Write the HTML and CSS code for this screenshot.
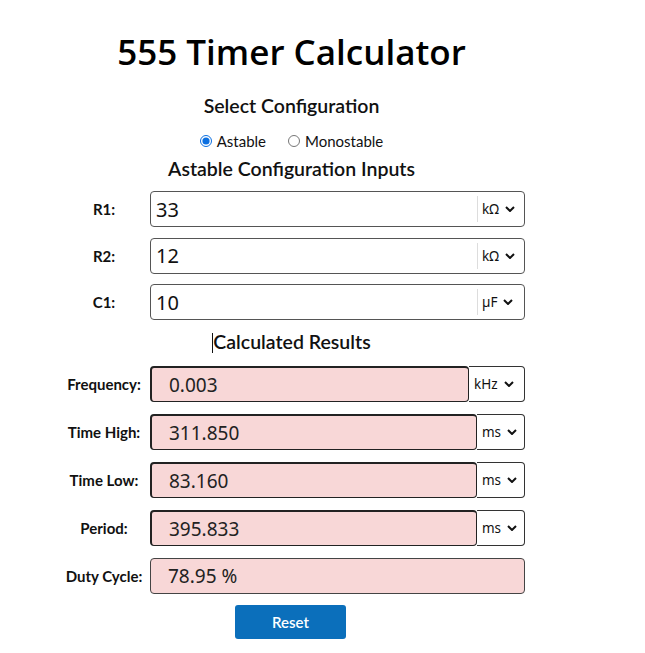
FILE: index.html
```
<html>
    <head>
<link rel="stylesheet" href="styles.css">
    </head>
    <body>
        <div class="calc">
            <h1 class="title">555 Timer Calculator</h1>

            <h3 class="heading">Select Configuration</h3>
            <div class="modes">
                <label class="mode"><input type="radio" name="mode" checked> Astable</label>
                <label class="mode"><input type="radio" name="mode"> Monostable</label>
            </div>

            <h3 class="heading">Astable Configuration Inputs</h3>
            <div class="rows inputs">
                <div class="row">
                    <span class="label">R1:</span>
                    <div class="field">
                        <span class="value">33</span>
                        <span class="unit">kΩ <svg class="chev" viewBox="0 0 10 6"><path d="M1 1l4 4 4-4"/></svg></span>
                    </div>
                </div>
                <div class="row">
                    <span class="label">R2:</span>
                    <div class="field">
                        <span class="value">12</span>
                        <span class="unit">kΩ <svg class="chev" viewBox="0 0 10 6"><path d="M1 1l4 4 4-4"/></svg></span>
                    </div>
                </div>
                <div class="row">
                    <span class="label">C1:</span>
                    <div class="field">
                        <span class="value">10</span>
                        <span class="unit">µF <svg class="chev" viewBox="0 0 10 6"><path d="M1 1l4 4 4-4"/></svg></span>
                    </div>
                </div>
            </div>

            <h3 class="heading results-heading"><span class="caret"></span>Calculated Results</h3>
            <div class="rows results">
                <div class="row">
                    <span class="label">Frequency:</span>
                    <div class="out">
                        <span class="result">0.003</span>
                        <span class="out-unit wide">kHz <svg class="chev" viewBox="0 0 10 6"><path d="M1 1l4 4 4-4"/></svg></span>
                    </div>
                </div>
                <div class="row">
                    <span class="label">Time High:</span>
                    <div class="out">
                        <span class="result">311.850</span>
                        <span class="out-unit">ms <svg class="chev" viewBox="0 0 10 6"><path d="M1 1l4 4 4-4"/></svg></span>
                    </div>
                </div>
                <div class="row">
                    <span class="label">Time Low:</span>
                    <div class="out">
                        <span class="result">83.160</span>
                        <span class="out-unit">ms <svg class="chev" viewBox="0 0 10 6"><path d="M1 1l4 4 4-4"/></svg></span>
                    </div>
                </div>
                <div class="row">
                    <span class="label">Period:</span>
                    <div class="out">
                        <span class="result">395.833</span>
                        <span class="out-unit">ms <svg class="chev" viewBox="0 0 10 6"><path d="M1 1l4 4 4-4"/></svg></span>
                    </div>
                </div>
                <div class="row">
                    <span class="label">Duty Cycle:</span>
                    <div class="out">
                        <span class="result plain">78.95 %</span>
                    </div>
                </div>
            </div>

            <div class="actions">
                <button class="reset">Reset</button>
            </div>
        </div>
    </body>
</html>
```

FILE: styles.css
```
/* Page */
body {
    margin: 0;
    background: #fff;
    color: #111;
    font-family: Lato, "Noto Sans", sans-serif;
}
.calc {
    width: 467px;
    margin-left: 58px;
    padding-top: 28px;
}
.title {
    margin: 0;
    text-align: center;
    font-family: "Open Sans", sans-serif;
    font-weight: 600;
    font-size: 35px;
    line-height: 48px;
    color: #000;
}
.heading {
    margin: 0;
    text-align: center;
    font-size: 19.5px;
    font-weight: 600;
    line-height: 24px;
    color: #111;
}
.heading:first-of-type {
    margin-top: 18px;
}
.modes {
    display: flex;
    justify-content: center;
    gap: 22px;
    margin: 13px 0 6px;
    font-size: 15px;
    line-height: 20px;
}
.mode {
    display: flex;
    align-items: center;
    gap: 5px;
}
.mode input {
    margin: 0;
    width: 12px;
    height: 12px;
    accent-color: #0b6fe0;
}
/* Rows: label column + field */
.rows {
    display: flex;
    flex-direction: column;
}
.inputs {
    gap: 10.5px;
    margin-top: 10px;
}
.results {
    gap: 12px;
    margin-top: 12px;
}
.row {
    display: flex;
    align-items: center;
    height: 36px;
}
.label {
    width: 92px;
    text-align: center;
    font-size: 15px;
    font-weight: 700;
}
/* Editable inputs with a unit selector inside the border */
.field {
    flex: 1;
    display: flex;
    align-items: center;
    height: 36px;
    box-sizing: border-box;
    border: 1px solid #555;
    border-radius: 4px;
}
.value {
    flex: 1;
    padding-left: 5px;
    font-family: "Noto Sans", sans-serif;
    font-size: 20px;
}
.unit {
    display: flex;
    align-items: center;
    gap: 6px;
    width: 47px;
    height: 26px;
    box-sizing: border-box;
    padding-left: 4px;
    border-left: 1px solid #ddd;
    font-family: "Noto Sans", sans-serif;
    font-size: 13.5px;
}
.chev {
    width: 10px;
    height: 6px;
    fill: none;
    stroke: #111;
    stroke-width: 2;
}
.results-heading {
    margin-top: 10px;
}
.caret {
    display: inline-block;
    width: 1px;
    height: 20px;
    background: #111;
    vertical-align: -4px;
}
/* Read-only results */
.out {
    flex: 1;
    display: flex;
    height: 36px;
}
.result {
    flex: 1;
    display: flex;
    align-items: center;
    padding-left: 17px;
    box-sizing: border-box;
    background: #f8d7d7;
    border: 1px solid #222;
    border-top-width: 2px;
    border-left-width: 2px;
    border-radius: 4px;
    font-family: "Noto Sans", sans-serif;
    font-size: 19px;
    color: #222;
}
.result.plain {
    border: 1px solid #444;
}
.out-unit {
    display: flex;
    align-items: center;
    gap: 6px;
    width: 48px;
    box-sizing: border-box;
    padding-left: 5px;
    border: 1px solid #333;
    border-left: 0;
    border-radius: 0 4px 4px 0;
    font-family: "Noto Sans", sans-serif;
    font-size: 13.5px;
}
.out-unit.wide {
    width: 56px;
}
.actions {
    display: flex;
    justify-content: center;
    margin-top: 11px;
}
.reset {
    width: 111px;
    height: 34px;
    margin-left: -2px;
    border: 0;
    border-radius: 3px;
    background: #0b6fbb;
    color: #fff;
    font-family: Lato, sans-serif;
    font-weight: 600;
    font-size: 15px;
}
```
